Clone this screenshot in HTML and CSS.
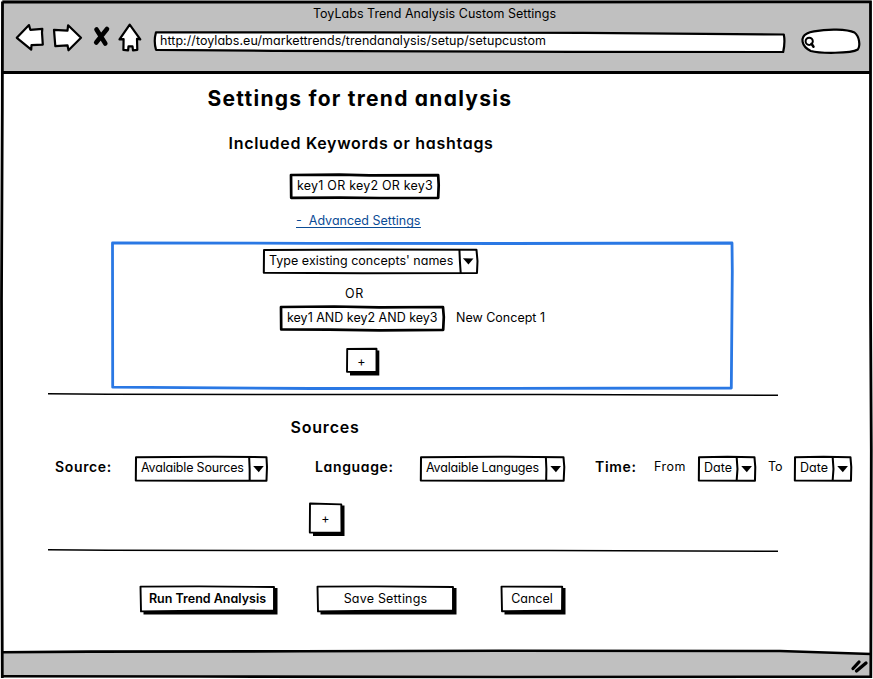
FILE: index.html
```html
<!DOCTYPE html>
<html lang="en">
<head>
<meta charset="utf-8">
<title>ToyLabs Trend Analysis Custom Settings</title>
<link rel="stylesheet" href="styles.css">
</head>
<body>
<div class="window">
  <header class="chrome">
    <div class="chrome-title">ToyLabs Trend Analysis Custom Settings</div>
    <div class="chrome-bar">
      <svg class="nav-icons" viewBox="0 0 132 32" width="132" height="32">
        <g fill="#fff" stroke="#000" stroke-width="2.2" stroke-linejoin="round">
          <path d="M2.800 15.800 15 3.100l1.300 4.700 12-.9-.3 3.700.8 12-11.300.6-.3 4.400Z"/>
          <path d="m40 7.800 13.500.8.600-5.300L67 15.800 54.500 28.300l-1-5-12.200.8Z"/>
          <path d="m115.700 2.600 10.600 14.800-3.300-.5.300 11-4.300.4-.5-4h-4l-.4 4-4.700-.4.200-10.700-4.100.2Z"/>
        </g>
        <path d="M82.500 7.500 91.300 21.500M93 7 82.200 20.500" fill="none" stroke="#000" stroke-width="4.600" stroke-linecap="round"/>
      </svg>
      <div class="address">
        <svg class="sketch" viewBox="0 0 633 23" width="633" height="23"><path class="fill" d="M3 1.300 210 1.400 430 1.900 630.800 3.500Q632.300 11 630.200 21L420 20.800 120 19.800 3 18.800Q.5 10 3 1.300Z"/></svg>
        <span class="url">http://toylabs.eu/markettrends/trendanalysis/setup/setupcustom</span>
      </div>
      <svg class="search" viewBox="0 0 62 28" width="62" height="28">
        <path class="fill" d="M14 3.300C28 .8 47 1 54.500 4.500c5 4 6 13 3.300 17-7 4.200-38 4-47 1.500C1 18 0 9 7 5.500c2-1.200 4.500-1.800 7-2.200Z"/>
        <circle cx="9.200" cy="13.300" r="3.600" fill="none" stroke="#000" stroke-width="2"/>
        <path d="m11.500 15.800 2 3" stroke="#000" stroke-width="2.500" stroke-linecap="round"/>
      </svg>
    </div>
  </header>

  <main class="page">
    <h1 class="title">Settings for trend analysis</h1>
    <h2 class="subtitle">Included Keywords or hashtags</h2>
    <div class="box keywords">
      <svg class="sketch" viewBox="0 0 150 27" width="151" height="27" preserveAspectRatio="none"><path class="thick" d="M2 2 50 1.700 80 2.300 148.200 2.200 148.700 12 148.200 24.800 90 25 50 24.600 2.200 24.800Z"/></svg>
      <span class="t-or">key1 OR key2 OR key3</span>
    </div>
    <a class="advanced">- &nbsp;Advanced Settings</a>

    <section class="concepts">
      <svg class="sketch" viewBox="0 0 622 149" width="622" height="149"><path class="blue" d="M1.500 2 200 2.300 400 2.500 621 2 621.300 30 620.300 147 400 147.300 200 147.500 1.700 146.200Z"/></svg>
      <div class="box select existing">
        <svg class="sketch" viewBox="0 0 216 27" width="217" height="27" preserveAspectRatio="none"><path class="line" d="M2 2 110 1.500 213.500 1.800 214.500 13 214 25 100 25.300 1.800 24.800Z"/><path class="line" d="m196.500 1.500.5 12 .8 11.500"/><path d="m200 10.200 10.500.2-5 6.200Z"/></svg>
        <span>Type existing concepts' names</span>
      </div>
      <div class="or">OR</div>
      <div class="concept-row">
        <div class="box new-keys">
          <svg class="sketch" viewBox="0 0 166 27" width="166.500" height="27" preserveAspectRatio="none"><path class="thick" d="M2 2 55 1.500 100 2.300 163.500 2 164.300 12 163.700 24.800 100 25.300 50 24.700 2.200 24.500Z"/></svg>
          <span>key1 AND key2 AND key3</span>
        </div>
        <span class="concept-name">New Concept 1</span>
      </div>
      <div class="button add-key">
        <svg class="sketch" viewBox="0 0 35 29" width="35" height="29"><path d="M30 3.500h4.300V28.500H5V25Z"/><path class="fill thin" d="m2.200 2 29.300-.3V25L2 24.800Z"/></svg>
        <span>+</span>
      </div>
    </section>

    <svg class="divider" viewBox="0 0 730 4" width="730" height="4"><path d="M0 .8 60 1.200 280 1.600 500 1.400 730 2.200" fill="none" stroke="#000" stroke-width="1.500"/></svg>

    <h2 class="sources">Sources</h2>
    <div class="filters">
      <b class="l-source">Source:</b>
      <div class="box select s-source">
        <svg class="sketch" viewBox="0 0 134 28" width="135" height="28" preserveAspectRatio="none"><path class="line" d="M2 2.300 80 1.700 131.500 2.200 132 12 131.500 25.800 70 25.800 1.800 25.500Z"/><path class="line" d="m114.300 2 .5 12v12"/><path d="m118.300 11 10.500.1-5 6.200Z"/></svg>
        <span class="tight">Avalaible Sources</span>
      </div>
      <b class="l-language">Language:</b>
      <div class="box select s-language">
        <svg class="sketch" viewBox="0 0 146 28" width="147" height="28" preserveAspectRatio="none"><path class="line" d="M2 2.300 80 1.700 143.500 2.200 144.300 12 143.700 25.800 70 25.800 1.800 25.500Z"/><path class="line" d="m126 2 .5 12-.2 12"/><path d="m130.500 11 10.500.1-5 6.200Z"/></svg>
        <span class="tight">Avalaible Languges</span>
      </div>
      <b class="l-time">Time:</b>
      <span class="l-from">From</span>
      <div class="box select s-date">
        <svg class="sketch" viewBox="0 0 59 28" width="60" height="28" preserveAspectRatio="none"><path class="line" d="M2 2.300 30 1.700 56.500 2.200 57.300 12 57 25.800 1.800 25.600Z"/><path class="line" d="m39 2 .8 12-.8 11.500"/><path d="m43.500 11 10.500.1-5 6.200Z"/></svg>
        <span>Date</span>
      </div>
      <span class="l-to">To</span>
      <div class="box select s-date">
        <svg class="sketch" viewBox="0 0 59 28" width="60" height="28" preserveAspectRatio="none"><path class="line" d="M2 2.300 30 1.700 56.500 2.200 57.300 12 57 25.800 1.800 25.600Z"/><path class="line" d="m39 2 .8 12-.8 11.500"/><path d="m43.500 11 10.500.1-5 6.200Z"/></svg>
        <span>Date</span>
      </div>
    </div>
    <div class="button add-source">
      <svg class="sketch" viewBox="0 0 37 35" width="37" height="35"><path d="M32 3.500h4.500V34H5V30Z"/><path class="fill thin" d="M2 1.500 33.300 2.400 33.500 30.400 1.800 30.600Z"/></svg>
      <span>+</span>
    </div>

    <svg class="divider second" viewBox="0 0 730 4" width="730" height="4"><path d="M0 .8 60 1.200 280 1.600 500 1.400 730 2.200" fill="none" stroke="#000" stroke-width="1.500"/></svg>

    <div class="actions">
      <div class="button run">
        <svg class="sketch" viewBox="0 0 139 30" width="139" height="30"><path d="M134 3h4.500V29.500H4.500V26Z"/><path class="fill thin" d="M1.500 1.600 60 1.400 135 2 135 25.500 60 25.800 2 26.400Z"/></svg>
        <b>Run Trend Analysis</b>
      </div>
      <div class="button save">
        <svg class="sketch" viewBox="0 0 141 30" width="141" height="30"><path d="M136 3h4.500V29.500H4.500V26Z"/><path class="fill thin" d="M1.500 1.600 60 1.400 137 2 137 25.500 60 25.800 2 26.400Z"/></svg>
        <span>Save Settings</span>
      </div>
      <div class="button cancel">
        <svg class="sketch" viewBox="0 0 66 30" width="66" height="30"><path d="M61 3h4.500V29.500H4.500V26Z"/><path class="fill thin" d="M1.500 1.600 62.200 1.800 62 25.500 2 26.200Z"/></svg>
        <span>Cancel</span>
      </div>
    </div>
  </main>

  <footer class="status">
    <svg viewBox="0 0 873 30" width="873" height="30">
      <path d="M2 3.500 200 2.500 500 1.800 780 2 871 5V27.500H2Z" fill="#c0c0c0"/>
      <path d="M2 3.200 90 2.600 300 2.300 500 1.800 780 2 871 5M2 27.200 200 27.500 500 28 871 27.700" fill="none" stroke="#000" stroke-width="2.600"/>
      <path d="m853 19.500 6-6.500M856.500 22l9.500-8" stroke="#000" stroke-width="3.300" stroke-linecap="round"/>
    </svg>
  </footer>
  <svg class="frame" viewBox="0 0 873 679" width="873" height="679"><path d="M2.500 1.900 300 2.200 870.500 1.800 870.500 300 871.300 450 870.800 678M2.500 1.500 2.300 110 1.500 300 1.800 500 2.300 678" fill="none" stroke="#000" stroke-width="2.800"/></svg>
</div>
</body>
</html>
```
FILE: styles.css
```css
* { box-sizing: border-box; }
body {
  margin: 0;
  background: #fff;
  color: #000;
  font: 12.5px/16px Inter, "Open Sans", sans-serif;
  font-feature-settings: "cv11";
}
h1, h2 { margin: 0; font-weight: 600; white-space: nowrap; }
span, b { white-space: nowrap; }
b { font-weight: 600; }
svg { display: block; }

.window { position: relative; width: 873px; height: 679px; overflow: hidden; display: flex; flex-direction: column; }
.frame { position: absolute; inset: 0; pointer-events: none; }

/* Browser chrome */
.chrome { height: 74px; margin: 0 2px; background: #c0c0c0; border-bottom: 3px solid #000; padding-top: 5.5px; flex: none; }
.chrome-title { text-align: center; padding-right: 4px; letter-spacing: .03px; }
.chrome-bar { display: flex; padding-left: 12px; }
.nav-icons { flex: none; }
.address { position: relative; width: 633px; height: 23px; margin: 9px 0 0 7px; padding: 2px 0 0 7px; }
.url { position: relative; letter-spacing: .05px; }
.search { margin: 6px 0 0 14px; flex: none; }

/* Hand-drawn outlines */
.sketch { position: absolute; left: 0; top: 0; overflow: visible; }
.box .sketch, .button .sketch { left: -.6px; }
.fill { fill: #fff; stroke: #000; stroke-width: 2.2; stroke-linejoin: round; }
.thin { stroke-width: 1.9; }
.line { fill: none; stroke: #000; stroke-width: 2; stroke-linejoin: round; }
.thick { fill: none; stroke: #000; stroke-width: 2.7; stroke-linejoin: round; }
.blue { fill: none; stroke: #2a78e4; stroke-width: 2.8; stroke-linejoin: round; }
.box, .button { position: relative; flex: none; }
.box span, .button span, .button b { position: relative; }
.box { padding: 4.5px 0 0 7px; height: 27px; }
.button { display: flex; justify-content: center; padding-right: 4px; }

/* Page body */
.page { flex: 1; padding-top: 10px; }
.title { margin-left: 207.6px; font-size: 21px; line-height: 30px; font-weight: 650; letter-spacing: 1.25px; }
.subtitle { margin: 19px 0 0 228.6px; font-size: 16px; line-height: 20px; letter-spacing: .7px; }
.keywords { width: 150px; margin: 20px 0 0 290px; }
.t-or { letter-spacing: .22px; }
.advanced { display: block; width: 125px; height: 16px; margin: 12px 0 0 296px; color: #0b4c96; border-bottom: 1px solid #0b4c96; white-space: pre; line-height: 18px; }
.concepts { position: relative; width: 622px; height: 149px; margin: 13px 0 0 111px; padding-top: 7px; }
.existing { width: 216px; margin-left: 152px; padding: 5px 0 0 6px; letter-spacing: .02px; }
.or { margin: 11px 0 0 234px; letter-spacing: .6px; }
.concept-row { display: flex; margin: 3px 0 0 169px; }
.new-keys { width: 166px; padding-top: 4.5px; }
.concept-name { margin: 4.5px 0 0 10px; letter-spacing: 0; }
.add-key { width: 35px; height: 29px; margin: 15px 0 0 235px; padding-top: 6.5px; }
.divider { margin: 2.5px 0 0 48px; }
.sources { margin: 20px 0 0 290.5px; font-size: 16px; line-height: 20px; letter-spacing: .8px; }
.filters { display: flex; height: 28px; margin: 18px 0 0 55px; }
.filters .box { height: 28px; padding: 5px 0 0 6px; }
.filters b { font-size: 14px; line-height: 24px; letter-spacing: .65px; flex: none; }
.filters > span { line-height: 23px; flex: none; }
.tight { letter-spacing: -.18px; }
.l-source { width: 80px; }
.s-source { width: 134px; }
.l-language { width: 105px; margin-left: 46px; }
.s-language { width: 146px; }
.l-time { width: 59px; margin-left: 29px; }
.l-from { width: 44px; letter-spacing: .5px; }
.s-date { width: 59px; }
.l-to { width: 26px; margin-left: 11px; }
.add-source { width: 37px; height: 35px; margin: 19px 0 0 308.5px; padding: 9px 3px 0 0; }
.second { margin-top: 12px; }
.actions { display: flex; margin: 32px 0 0 140px; }
.actions .button { height: 30px; padding-top: 6.5px; }
.run { width: 139px; }
.save { width: 141px; margin-left: 38px; letter-spacing: .2px; }
.cancel { width: 66px; margin-left: 43px; }

.status { height: 30px; flex: none; }
```
